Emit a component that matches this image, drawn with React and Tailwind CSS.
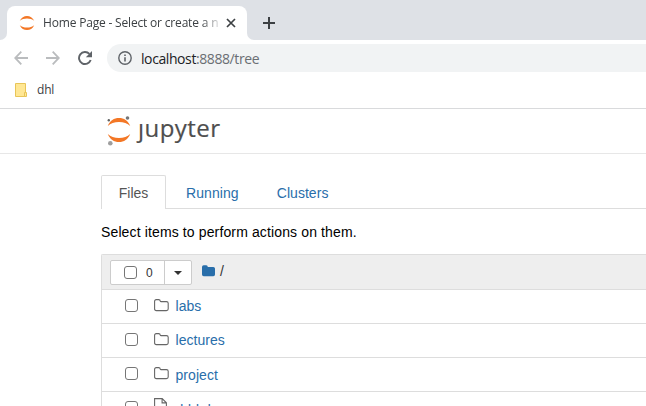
const SEG = "font-['Open_Sans','Noto_Sans',sans-serif]";

function Folder() {
  return (
    <svg className="block h-[13px] w-[15px]" viewBox="0 0 15 13" fill="none" stroke="#666" strokeWidth="1.1">
      <path d="M.6 10V2.3Q.6.6 2.3.6H4.6Q6.2.6 6.2 2.100Q6.200 2.600 6.900 2.600H12.400Q14.200 2.600 14.200 4.300V10Q14.200 11.600 12.400 11.600H2.400Q.6 11.600.6 10Z" />
    </svg>
  );
}

function Box({ className = "" }) {
  return <span className={"block h-[13px] w-[13px] shrink-0 rounded-[3px] border border-[#767676] bg-white " + className} />;
}

function Row({ name, file, offset = "-mt-[2px]" }) {
  return (
    <div className="flex h-[34px] shrink-0 items-start border-b border-[#ddd] pl-[23px] pt-[9px]">
      <Box />
      <span className="ml-4 w-[22px]">
        {file ? (
          <svg className="-mt-[3px] block h-[15px] w-[13px]" viewBox="0 0 13 15" fill="none" stroke="#666" strokeWidth="1.1">
            <path d="M.6.6H8.2L12.4 4.8V14.4H.6ZM8.1.6V4.9H12.4" />
          </svg>
        ) : (
          <Folder />
        )}
      </span>
      <span className={offset + " -ml-[0.5px] text-[14px] leading-[18px] tracking-[0.05px] text-[#296eaa]"}>{name}</span>
    </div>
  );
}

export default function App() {
  return (
    <div className="flex h-[406px] w-[646px] flex-col overflow-hidden bg-white font-['Liberation_Sans',Arial,sans-serif] text-[14px] text-black">
      <div className="flex h-10 shrink-0 bg-[#dee1e6]">
        <div className="flex w-[7px] items-end bg-[linear-gradient(to_bottom,#dee1e6_60%,#fff_60%)]">
          <div className="h-10 w-[7px] rounded-br-[7px] bg-[#dee1e6]" />
        </div>
        <div className="mt-[6px] flex w-[240px] items-center rounded-t-[8px] bg-white pl-[12px]">
          <svg className="h-4 w-4 shrink-0" viewBox="0 0 16 16" fill="#f37726">
            <path d="M.8 5.8C2.3 2.5 5 .9 8 .9s5.700 1.600 7.200 4.900C13.300 4.200 10.800 3.500 8 3.500S2.700 4.200.8 5.800ZM.8 10.200C2.300 13.500 5 15.100 8 15.100s5.700-1.600 7.200-4.900C13.300 11.800 10.800 12.500 8 12.500S2.700 11.800.8 10.200Z" />
          </svg>
          <div className={"ml-2 w-[177px] overflow-hidden whitespace-nowrap text-[12px] leading-[18px] tracking-[-0.18px] text-[#3c4043] [mask-image:linear-gradient(to_right,black_158px,transparent_180px)] " + SEG}>
            Home Page - Select or create a n
          </div>
          <svg className="ml-[6px] h-[10px] w-[10px]" viewBox="0 0 10 10" stroke="#3c4043" strokeWidth="1.7">
            <path d="M1 1L9 9M9 1L1 9" />
          </svg>
        </div>
        <div className="flex w-[7px] bg-[linear-gradient(to_bottom,#dee1e6_60%,#fff_60%)]">
          <div className="h-10 w-[7px] rounded-bl-[7px] bg-[#dee1e6]" />
        </div>
        <svg className="ml-[9px] mt-[17px] h-3 w-3" viewBox="0 0 12 12" stroke="#3c4043" strokeWidth="2">
          <path d="M6 0V12M0 6H12" />
        </svg>
      </div>
      <div className="flex h-9 shrink-0 items-center pl-[14px]">
        <svg className="h-[14px] w-[14px]" viewBox="0 0 14 14" fill="none" stroke="#babcbe" strokeWidth="1.8">
          <path d="M14 7H1.500M7.300.7L1.200 7L7.300 13.300" />
        </svg>
        <svg className="ml-[18px] h-[14px] w-[14px]" viewBox="0 0 14 14" fill="none" stroke="#babcbe" strokeWidth="1.800">
          <path d="M0 7H12.500M6.700.7L12.800 7L6.700 13.300" />
        </svg>
        <svg className="ml-[18px] h-[14px] w-[14px]" viewBox="0 0 14 14" fill="none">
          <path d="M12.700 9A6 6 0 1 1 11.400 2.900" stroke="#5f6368" strokeWidth="1.900" />
          <path d="M14 0V6.200H7.800Z" fill="#5f6368" />
        </svg>
        <div className={"ml-[15px] flex h-7 flex-1 items-center rounded-l-full bg-[#f1f3f4] pl-[11px] text-[14px] text-[#202124] " + SEG}>
          <svg className="mr-[9px] h-[14px] w-[14px]" viewBox="0 0 14 14" fill="none" stroke="#5f6368" strokeWidth="1.400">
            <circle cx="7" cy="7" r="6.200" />
            <path d="M7 6.200V10.500M7 3.500V5" strokeWidth="1.600" />
          </svg>
          <span className="tracking-[-0.41px]">localhost<span className="text-[#6a6e73]">:8888/tree</span></span>
        </div>
      </div>
      <div className="flex h-[33px] shrink-0 items-start border-b border-[#d9dadc] pl-[15px] pt-[7px]">
        <svg className="h-[14px] w-3" viewBox="0 0 12 14">
          <path d="M.5.5H10.500V13.500H.5Z" fill="#ffe794" stroke="#e8c558" />
          <path d="M9.500 9.500H11.500V13.500H9.500Z" fill="#ffe794" stroke="#e8c558" />
        </svg>
        <span className={"ml-[10px] -mt-[2px] text-[12px] leading-[17px] tracking-[-0.2px] text-[#3c4043] " + SEG}>dhl</span>
      </div>
      <div className="flex h-[45px] shrink-0 border-b border-[#e7e7e7] pl-[106px] pt-[6px]">
        <svg className="h-[32px] w-[26px] shrink-0" viewBox="0 0 26 32">
          <path d="M1.800 11.500C4 6 8 3.500 13 3.500S22 6 24.200 11.500C21.500 8.700 17.500 7.400 13 7.400S4.500 8.700 1.800 11.500ZM1.800 19.500C4 25 8 27.500 13 27.500S22 25 24.200 19.500C21.500 22.300 17.500 23.600 13 23.600S4.500 22.300 1.800 19.500Z" transform="translate(0 -.5)" fill="#f37726" />
          <circle cx="21.500" cy="3" r="1.800" fill="#767677" />
          <circle cx="2.800" cy="5.300" r="1.200" fill="#616262" />
          <circle cx="4.300" cy="28.300" r="2.300" fill="#9e9e9e" />
        </svg>
        <span className={"ml-[6px] -mt-[3px] text-[24px] leading-[32px] tracking-[0.45px] text-[#4e4e4e] [-webkit-text-stroke:0.2px_#4e4e4e] " + SEG}>ȷupyter</span>
      </div>
      <div className="ml-[101px] mt-[21px] flex h-[34px] shrink-0 items-end border-b border-[#ddd]">
        <div className="-mb-px flex h-[34px] w-[65px] items-center justify-center rounded-t-[2px] border border-b-0 border-[#ddd] bg-white pt-px text-[#555]">Files</div>
        <div className="flex h-[31px] items-center pl-[20px] pt-[2px] tracking-[0.08px] text-[#296eaa]">Running</div>
        <div className="flex h-[31px] items-center pl-[38px] pt-[2px] tracking-[0.05px] text-[#296eaa]">Clusters</div>
      </div>
      <div className="ml-[101px] mt-[13px] h-[32px] shrink-0 leading-[20px] tracking-[0.13px]">Select items to perform actions on them.</div>
      <div className="ml-[101px] flex min-h-0 flex-1 flex-col overflow-hidden rounded-tl-[2px] border-l border-t border-[#ddd]">
        <div className="flex h-[35px] shrink-0 items-start border-b border-[#ddd] bg-[#eee] pl-2 pt-[5px]">
          <div className="flex h-[25px] w-[82px] rounded-[2px] border border-[#ccc] bg-white">
            <div className="flex w-[54px] items-center border-r border-[#ccc] pl-[13px]">
              <Box />
              <span className="ml-[9px] text-[12px] text-[#333]">0</span>
            </div>
            <div className="flex flex-1 items-center justify-center">
              <span className="border-x-4 border-t-4 border-x-transparent border-t-[#333]" />
            </div>
          </div>
          <svg className="ml-[10px] mt-[5px] h-[12px] w-[13px]" viewBox="0 0 13 12" fill="#296eaa">
            <path d="M0 9.500V2Q0 .3 1.700.3H4.200Q5.800.3 5.800 1.900H11.300Q13 1.900 13 3.600V9.500Q13 11.200 11.300 11.200H1.700Q0 11.200 0 9.500Z" />
          </svg>
          <span className="ml-[5px] mt-px leading-[20px] text-[#333]">/</span>
        </div>
        <Row name="labs" />
        <Row name="lectures" />
        <Row name="project" offset="-mt-px" />
        <Row name="ddd.d" file offset="mt-0" />
      </div>
    </div>
  );
}
